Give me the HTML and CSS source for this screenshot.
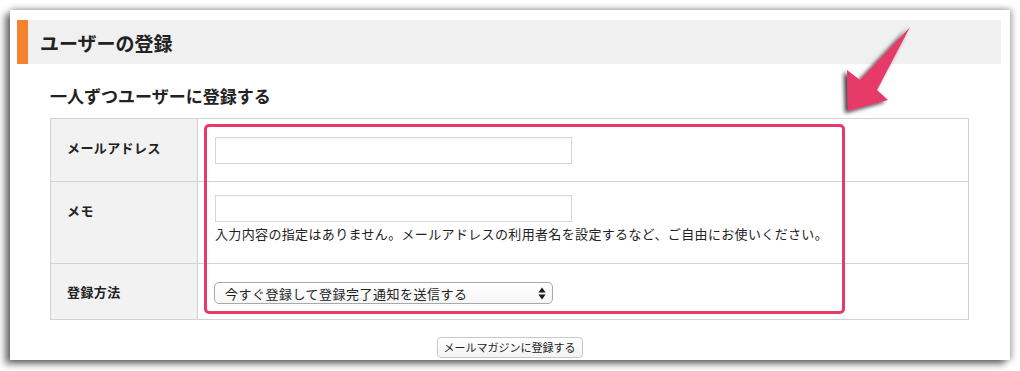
FILE: index.html
```html
<!DOCTYPE html>
<html lang="ja">
<head>
<meta charset="utf-8">
<link rel="stylesheet" href="styles.css">
</head>
<body>
<div class="stage">
  <div class="panel">
    <div class="page-head"><h1 class="page-title">ユーザーの登録</h1></div>
    <div class="content">
      <h2 class="section-title">一人ずつユーザーに登録する</h2>
      <table class="form-table">
        <tr class="row-email">
          <th>メールアドレス</th>
          <td><div class="text-input"></div></td>
        </tr>
        <tr class="row-memo">
          <th>メモ</th>
          <td>
            <div class="text-input"></div>
            <p class="help">入力内容の指定はありません。メールアドレスの利用者名を設定するなど、ご自由にお使いください。</p>
          </td>
        </tr>
        <tr class="row-method">
          <th>登録方法</th>
          <td>
            <div class="select">
              <span class="select-text">今すぐ登録して登録完了通知を送信する</span>
              <svg class="select-arrows" width="8" height="13" viewBox="0 0 8 13"><path d="M4 0.5 L7.6 5.6 L0.4 5.6 Z M4 12.5 L7.6 7.4 L0.4 7.4 Z" fill="#1a1a1a"/></svg>
            </div>
          </td>
        </tr>
      </table>
      <div class="actions"><div class="button">メールマガジンに登録する</div></div>
    </div>
    <div class="highlight"></div>
    <svg class="arrow" width="90" height="110" viewBox="0 0 90 110">
      <defs>
        <filter id="sh" x="-50%" y="-50%" width="200%" height="200%">
          <feGaussianBlur in="SourceAlpha" stdDeviation="2"/>
          <feOffset dx="-3" dy="2" result="b"/>
          <feComponentTransfer><feFuncA type="linear" slope="0.8"/></feComponentTransfer>
          <feMerge><feMergeNode/><feMergeNode in="SourceGraphic"/></feMerge>
        </filter>
      </defs>
      <polygon points="70,7 20,60 7,50 8,91 48,80 37,70" fill="#e63a68" filter="url(#sh)"/>
    </svg>
  </div>
</div>
</body>
</html>
```

FILE: styles.css
```css
html, body {
  margin: 0;
  padding: 0;
  background: #ffffff;
}
body {
  font-family: "Noto Sans CJK JP", "Noto Sans", sans-serif;
  color: #222;
}
.stage {
  padding: 10px 10px 11px 10px;
}
.panel {
  position: relative;
  width: 1000px;
  height: 350px;
  background: #fff;
  box-shadow: -5px 4px 7px rgba(0, 0, 0, 0.55), 0 -2px 6px rgba(0, 0, 0, 0.18), 3px 0 6px rgba(0, 0, 0, 0.2);
}
.page-head {
  margin: 0 9px 0 7px;
  position: relative;
  top: 10px;
  height: 44px;
  background: #f0f0f0;
  border-left: 11px solid #f5822e;
  display: flex;
  align-items: center;
}
.page-title {
  margin: 0 0 0 12px;
  font-size: 19px;
  font-weight: bold;
  color: #222;
  line-height: 1;
}
.content {
  padding: 30px 41px 0 40px;
}
.section-title {
  margin: 0;
  height: 24px;
  font-size: 17px;
  line-height: 24px;
  font-weight: bold;
  color: #222;
}
.form-table {
  margin-top: 10px;
  width: 919px;
  border-collapse: collapse;
}
.form-table th, .form-table td {
  border: 1px solid #d2d2d2;
  padding: 0;
}
.form-table th {
  width: 147px;
  background: #f2f2f2;
  text-align: left;
  font-size: 13px;
  font-weight: bold;
  letter-spacing: 0.4px;
  padding-left: 16px;
  box-sizing: border-box;
}
.form-table td {
  padding-left: 17px;
}
.row-email { height: 63px; }
.row-memo { height: 82px; }
.row-method { height: 56px; }
.row-email th { padding-bottom: 5px; }
.row-memo th { padding-bottom: 24px; }
.row-memo td { padding-top: 13px; vertical-align: top; }
.row-method td { padding-top: 3px; }
.text-input {
  width: 357px;
  height: 27px;
  border: 1px solid #d6d6d6;
  box-shadow: inset 0 1px 1px rgba(0,0,0,0.04);
  box-sizing: border-box;
  background: #fff;
}
.help {
  margin: 3px 0 0 0;
  font-size: 13px;
  letter-spacing: 0.35px;
  line-height: 18px;
  color: #222;
}
.select {
  width: 339px;
  height: 22px;
  margin-left: -1px;
  box-sizing: border-box;
  border: 1px solid #a9a9a9;
  border-radius: 5px;
  background: linear-gradient(#ffffff, #f6f6f6);
  display: flex;
  align-items: center;
  justify-content: space-between;
  padding: 0 6px 0 10px;
}
.select-text {
  font-size: 13px;
  letter-spacing: 0.5px;
  color: #222;
  line-height: 1;
}
.actions {
  display: flex;
  justify-content: center;
  padding-top: 17px;
}
.button {
  width: 146px;
  height: 21px;
  box-sizing: border-box;
  border: 1px solid #c8c8c8;
  border-radius: 4px;
  background: linear-gradient(#ffffff, #f3f3f3);
  font-size: 11px;
  line-height: 19px;
  text-align: center;
  color: #222;
}
.highlight {
  position: absolute;
  left: 194px;
  top: 114px;
  width: 641px;
  height: 190px;
  box-sizing: border-box;
  border: 3px solid #e63a68;
  border-radius: 5px;
}
.arrow {
  position: absolute;
  left: 830px;
  top: 10px;
}
```
